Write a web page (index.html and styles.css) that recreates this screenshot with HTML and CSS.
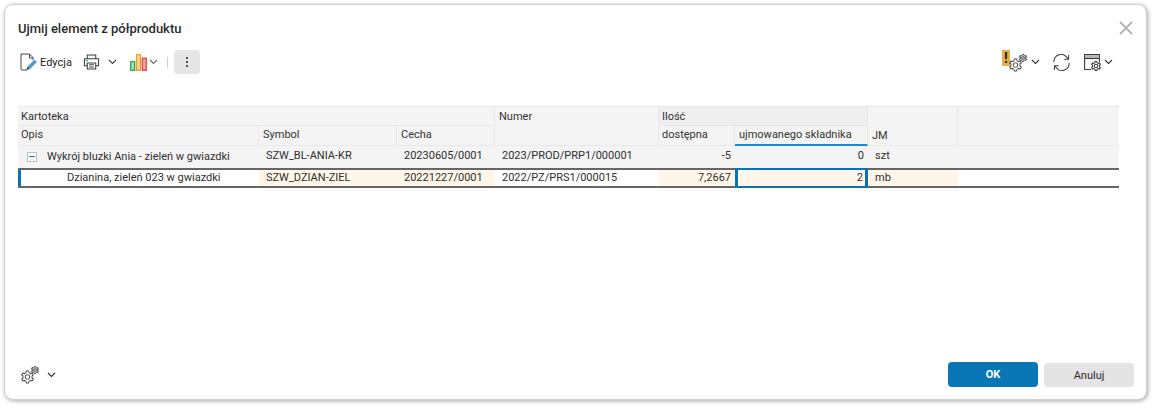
FILE: index.html
```html
<!DOCTYPE html>
<html lang="pl">
<head>
<meta charset="utf-8">
<title>Ujmij element z półproduktu</title>
<link rel="stylesheet" href="styles.css">
</head>
<body>
<svg class="defs" width="0" height="0" aria-hidden="true">
  <defs>
    <path id="tooth" d="M-2.300-3.980L-1.420-4.370-1.080-6.110H1.080L1.420-4.370 2.300-3.980"/>
    <g id="gear" fill="none">
      <use href="#tooth"/>
      <use href="#tooth" transform="rotate(60)"/>
      <use href="#tooth" transform="rotate(120)"/>
      <use href="#tooth" transform="rotate(180)"/>
      <use href="#tooth" transform="rotate(240)"/>
      <use href="#tooth" transform="rotate(300)"/>
      <circle r="2.300"/>
    </g>
  </defs>
</svg>
<div class="dialog">
  <header class="title-bar">
    <h1 class="title">Ujmij element z półproduktu</h1>
    <svg class="close" width="14" height="14" viewBox="0 0 14 14"><path d="M1 1l12 12M13 1L1 13" stroke="#b4b4b4" stroke-width="1.800" fill="none"/></svg>
  </header>
  <div class="toolbar">
    <div class="tool-group">
      <svg class="ic-edit" width="17" height="18" viewBox="0 0 17 18" fill="none"><path d="M7 17H2a1 1 0 0 1-1-1V1h8.500L13 4.500V7" stroke="#444" stroke-width="1"/><path d="M9.500 1V5H13" stroke="#444" stroke-width="1"/><path d="M7.500 14l7-7 2 2-7 7z" fill="#4a9ad4" stroke="#2a7fbd" stroke-width=".6"/><path d="M6.500 17l1-3 2 2z" fill="#333"/></svg>
      <span class="tool-label">Edycja</span>
      <svg class="ic-print" width="17" height="18" viewBox="0 0 18 18" fill="none" stroke="#3c3c3c" stroke-width="1.100"><path d="M4.500 5.500V1.500h9v4"/><path d="M4.500 13H1.500V5.500h15V13h-3"/><path d="M4.500 10h9v6.500h-9z"/><path d="M6.500 12h5M6.500 14.300h5"/><path d="M3 7.500h2" stroke="#1c86c8" stroke-width="1.300"/></svg>
      <svg class="chev" width="9" height="6" viewBox="0 0 9 6"><path d="M1 1l3.500 3.500L8 1" stroke="#444" fill="none" stroke-width="1.100"/></svg>
      <svg class="ic-chart" width="17" height="17" viewBox="0 0 17 17"><rect x=".7" y="7.700" width="4" height="8.600" fill="#a8dcb4" stroke="#1fa34a" stroke-width="1.200"/><rect x="6.500" y=".7" width="4" height="15.600" fill="#fbd590" stroke="#ee9a2a" stroke-width="1.200"/><rect x="12.300" y="4.200" width="4" height="12.100" fill="#f7a6a6" stroke="#e63a3a" stroke-width="1.200"/></svg>
      <svg class="chev chev-light" width="9" height="6" viewBox="0 0 9 6"><path d="M1 1l3.500 3.500L8 1" stroke="#666" fill="none" stroke-width="1.100"/></svg>
      <span class="sep"></span>
      <button class="more"><span class="dot"></span><span class="dot"></span><span class="dot"></span></button>
    </div>
    <div class="tool-group">
      <span class="warn-gears">
        <span class="warn-mark">!</span>
        <svg class="gears" width="18" height="18" viewBox="0 0 18 18" stroke="#484848" stroke-width="1"><use href="#gear" transform="translate(6.500 11)"/><use href="#gear" transform="translate(14 4) scale(.58)" stroke-width="1.700"/></svg>
      </span>
      <svg class="chev chev-a" width="9" height="6" viewBox="0 0 9 6"><path d="M1 1l3.500 3.500L8 1" stroke="#333" fill="none" stroke-width="1.100"/></svg>
      <svg class="ic-sync" width="17" height="17" viewBox="0 0 18 18" fill="none" stroke="#3c3c3c" stroke-width="1.100"><path d="M1 8.500A7.500 7.500 0 0 1 14.500 3.500L16.500 5.500"/><path d="M16.500 1v4.500H12"/><path d="M17 9.500A7.500 7.500 0 0 1 3.500 14.500L1.500 12.500"/><path d="M1.500 17v-4.500H6"/></svg>
      <svg class="ic-window" width="18" height="17" viewBox="0 0 18 17" fill="none" stroke="#3c3c3c" stroke-width="1.100"><path d="M7 15.500H.6V.6h14.800V8"/><rect x="1" y="1" width="14" height="3" fill="#b9b9b9" stroke="none"/><path d="M.6 4.500h14.800"/><circle cx="12" cy="12" r="4.800" fill="#fff" stroke="none"/><use href="#gear" transform="translate(12 12) scale(.75)" stroke-width="1.400"/></svg>
      <svg class="chev chev-b" width="9" height="6" viewBox="0 0 9 6"><path d="M1 1l3.500 3.500L8 1" stroke="#333" fill="none" stroke-width="1.100"/></svg>
    </div>
  </div>

  <div class="grid">
    <div class="th th-kart">Kartoteka</div>
    <div class="th th-num">Numer</div>
    <div class="th th-ilosc">Ilość</div>
    <div class="th th-jm">JM</div>
    <div class="th th-rest"></div>
    <div class="th th-low">Opis</div>
    <div class="th th-low th-sym">Symbol</div>
    <div class="th th-low th-sym">Cecha</div>
    <div class="th th-low">dostępna</div>
    <div class="th th-low th-sorted">ujmowanego składnika</div>

    <div class="row row-parent">
      <div class="td td-tree"><span class="toggle"></span>Wykrój bluzki Ania - zieleń w gwiazdki</div>
      <div class="td">SZW_BL-ANIA-KR</div>
      <div class="td">20230605/0001</div>
      <div class="td">2023/PROD/PRP1/000001</div>
      <div class="td td-num">-5</div>
      <div class="td td-num">0</div>
      <div class="td">szt</div>
      <div class="td"></div>
    </div>
    <div class="row row-active">
      <div class="td td-child">Dzianina, zieleń 023 w gwiazdki</div>
      <div class="td req">SZW_DZIAN-ZIEL</div>
      <div class="td req">20221227/0001</div>
      <div class="td">2022/PZ/PRS1/000015</div>
      <div class="td td-num req">7,2667</div>
      <div class="td td-num req td-edit">2</div>
      <div class="td req">mb</div>
      <div class="td"></div>
    </div>
  </div>

  <footer class="footer">
    <div class="footer-tools">
      <svg class="gears" width="18" height="18" viewBox="0 0 18 18" stroke="#484848" stroke-width="1"><use href="#gear" transform="translate(6.500 11)"/><use href="#gear" transform="translate(14 4) scale(.58)" stroke-width="1.700"/></svg>
      <svg class="chev" width="9" height="6" viewBox="0 0 9 6"><path d="M1 1l3.500 3.500L8 1" stroke="#333" fill="none" stroke-width="1.100"/></svg>
    </div>
    <div class="footer-buttons">
      <button class="btn btn-primary">OK</button>
      <button class="btn btn-secondary">Anuluj</button>
    </div>
  </footer>
</div>
</body>
</html>
```
FILE: styles.css
```css
* { box-sizing: border-box; }
html, body { margin: 0; height: 100%; background: #fff; }
body { padding: 4px 8px 10px 4px; font-family: Roboto, "Liberation Sans", sans-serif; font-size: 11px; color: #333; overflow: hidden; }
.defs { position: absolute; }

.dialog {
  width: 1143px; height: 396px;
  background: #fff;
  border: 1px solid #d0d0d0;
  border-radius: 9px;
  box-shadow: 1px 1px 4px rgba(0,0,0,.35);
  display: flex; flex-direction: column;
  padding: 0 13px;
}

.title-bar { display: flex; justify-content: space-between; align-items: center; height: 33px; padding-top: 14px; }
.title { margin: 0; font-size: 13px; font-weight: 500; color: #2b2b2b; line-height: 18px; }
.close { margin-right: 0; margin-top: -2px; }

.toolbar { display: flex; justify-content: space-between; align-items: center; height: 26px; margin-top: 11px; }
.tool-group { display: flex; align-items: center; }
.ic-edit { margin-left: 2px; }
.tool-label { margin-left: 3px; color: #222; font-size: 11px; }
.ic-print { margin-left: 11px; }
.chev { display: block; margin-left: 8px; }
.ic-chart { margin-left: 13px; }
.chev-light { margin-left: 2px; }
.sep { width: 1px; height: 11px; background: #d0d0d0; margin-left: 9px; }
.more {
  width: 26px; height: 24px; margin-left: 6px; border: 0; border-radius: 4px; background: #e6e6e6;
  display: flex; flex-direction: column; align-items: center; justify-content: center; gap: 2px; padding: 0;
}
.dot { width: 2px; height: 2px; background: #555; display: block; }

.warn-gears { position: relative; display: block; width: 21px; height: 22px; }
.warn-mark {
  position: absolute; left: 0; top: -1px; width: 8px; height: 16px; background: #e3b04f;
  font: 700 14px/16px Roboto, sans-serif; color: #222; text-align: center;
}
.warn-gears .gears { position: absolute; left: 7px; top: 3px; }
.chev-a { margin-left: 8px; }
.ic-sync { margin-left: 13px; }
.ic-window { display: block; margin-left: 14px; }
.chev-b { margin-left: 2px; margin-right: 20px; }

.grid {
  margin-top: 31px;
  display: grid;
  width: 1101px;
  grid-template-columns: 241px 138px 98px 164px 76px 133px 90px 161px;
  grid-template-rows: 20px 20px 22px 20px;
}
.th {
  background: #f4f4f4;
  border-top: 1px solid #e8e8e8;
  border-right: 1px solid #e8e8e8;
  border-bottom: 1px solid #e8e8e8;
  padding: 3px 3px 0;
  line-height: 14px;
  color: #333;
  white-space: nowrap;
}
.th-low { border-top: 0; padding-top: 2px; }
.th-sym { padding-left: 4px; }
.th-kart { grid-column: 1 / span 3; }
.th-num { grid-column: 4; grid-row: 1 / span 2; padding-left: 4px; }
.th-ilosc { grid-column: 5 / span 2; background: #efefef; }
.th-jm { grid-column: 7; grid-row: 1 / span 2; padding: 22px 4px 0; }
.th-rest { grid-column: 8; grid-row: 1 / span 2; border-right: 0; }
.th-sorted { border-bottom: 2px solid #1a8ccc; padding-left: 4px; }

.row { grid-column: 1 / -1; display: grid; grid-template-columns: subgrid; align-items: stretch; }
.td { padding: 0 3px 0 7px; line-height: 20px; white-space: nowrap; color: #2f2f2f; }
.td-num { text-align: right; padding: 0 4px 0 0; }

.row-parent { background: #f4f4f4; }
.td-tree { display: flex; align-items: center; padding-left: 9px; }
.toggle {
  width: 10px; height: 10px; border: 1px solid #c0c0c0; background: #fff; position: relative; margin-right: 10px; flex: none;
}
.toggle::after { content: ""; position: absolute; left: 1px; right: 1px; top: 3px; height: 1px; background: #1f6ea8; }

.row-active {
  border-top: 2px solid #666;
  border-bottom: 2px solid #666;
  background: #fff;
  height: 20px;
  position: relative;
}
.row-active .td { line-height: 16px; height: 16px; }
.td-child { padding-left: 46px; border-left: 3px solid #0a73b3; }
.req { background: #fef6e9; }
.row-active .td-edit {
  position: relative; z-index: 1;
  height: 20px; margin-top: -2px; line-height: 16px;
  border: 3px solid #0a73b3; border-top-width: 2px; border-bottom-width: 2px; padding-right: 2px;
}

.footer { margin-top: auto; display: flex; justify-content: space-between; align-items: center; height: 26px; margin-bottom: 11px; }
.footer-tools { display: flex; align-items: center; padding-left: 3px; }
.footer-buttons { display: flex; gap: 6px; margin-right: -1px; }
.btn { border: 0; border-radius: 4px; font-family: Roboto, sans-serif; font-size: 11px; height: 24px; width: 90px; padding: 0; }
.btn-primary { background: #0a76b5; color: #fff; font-weight: 700; height: 25px; margin-top: -1px; }
.btn-secondary { background: #e4e4e4; color: #2b2b2b; }
```
